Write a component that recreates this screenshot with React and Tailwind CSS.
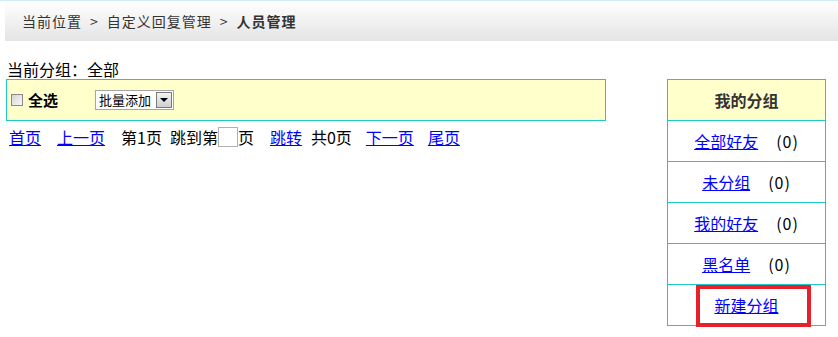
import React from 'react';

const cjk = { fontFamily: '"Noto Sans CJK SC", "Liberation Sans", sans-serif' };

function Checkbox() {
    return (
        <span className="inline-block w-[12px] h-[12px] border border-[#8a8a8a] bg-gradient-to-br from-[#d4d4d4] to-[#fafafa]" />
    );
}

function FakeSelect() {
    return (
        <div className="flex items-stretch h-[20px] w-[79px] border border-[#a5a5a5] bg-white">
            <span className="flex-1 pl-[3px] text-[13px] leading-[18px] text-black whitespace-nowrap">批量添加</span>
            <span className="w-[16px] my-[1px] mr-[1px] flex items-center justify-center border border-[#7a7a7a] bg-gradient-to-b from-[#f4f4f4] to-[#cfcfcf]">
                <span className="block w-0 h-0 border-l-[4px] border-r-[4px] border-t-[4px] border-l-transparent border-r-transparent border-t-black" />
            </span>
        </div>
    );
}

function GroupRow({ name, count, children }) {
    return (
        <div className="relative h-[41px] flex items-center justify-center border-b border-[#1cc8c8] text-[16px]">
            <a href="#" className="text-[#0000ff] underline">{name}</a>
            {count !== undefined && <span className="ml-[18px] text-black tracking-[1px]">({count})</span>}
            {children}
        </div>
    );
}

export default function App() {
    const link = 'text-[#0000ff] underline';

    return (
        <div className="w-[838px] h-[337px] bg-white overflow-hidden" style={cjk}>
            {/* top line + breadcrumb */}
            <div className="h-[1px] bg-[#d4ecf7]" />
            <div className="ml-[5px] h-[40px] flex items-center pl-[17px] bg-gradient-to-b from-[#ffffff] to-[#e4e4e4] text-[14px] text-[#333] tracking-[1px]">
                <span>当前位置</span>
                <span className="mx-[8px]">&gt;</span>
                <span>自定义回复管理</span>
                <span className="mx-[8px]">&gt;</span>
                <span className="font-bold">人员管理</span>
            </div>

            <div className="flex mt-[19px]">
                {/* left */}
                <div className="ml-[6px] w-[600px]">
                    <div className="h-[19px] pl-[1px] text-[16px] leading-[19px] text-black">当前分组：全部</div>
                    <div className="h-[42px] flex items-center border border-[#1cc8c8] bg-[#ffffcc] pl-[4px]">
                        <Checkbox />
                        <span className="ml-[5px] text-[15px] font-bold text-black">全选</span>
                        <span className="ml-[37px]"><FakeSelect /></span>
                    </div>
                    <div className="flex items-center mt-[6px] pl-[3px] text-[16px] leading-[20px] text-black">
                        <a href="#" className={link}>首页</a>
                        <a href="#" className={`${link} ml-[16px]`}>上一页</a>
                        <span className="ml-[16px]">第1页</span>
                        <span className="ml-[8px]">跳到第</span>
                        <span className="inline-block w-[20px] h-[20px] border border-[#b0b0b0] bg-white" />
                        <span>页</span>
                        <a href="#" className={`${link} ml-[16px]`}>跳转</a>
                        <span className="ml-[9px]">共0页</span>
                        <a href="#" className={`${link} ml-[14px]`}>下一页</a>
                        <a href="#" className={`${link} ml-[14px]`}>尾页</a>
                    </div>
                </div>

                {/* right: my groups */}
                <div className="ml-auto mr-[12px] mt-[19px] w-[159px] border-l border-r border-t border-[#1cc8c8]">
                    <div className="h-[41px] flex items-center justify-center bg-[#ffffcc] border-b border-[#1cc8c8] text-[16px] font-bold text-[#333]">
                        我的分组
                    </div>
                    <GroupRow name="全部好友" count={0} />
                    <GroupRow name="未分组" count={0} />
                    <GroupRow name="我的好友" count={0} />
                    <GroupRow name="黑名单" count={0} />
                    <GroupRow name="新建分组">
                        <span className="absolute left-[28px] top-0 w-[115px] h-[42px] border-[4px] border-[#e8202a]" />
                    </GroupRow>
                </div>
            </div>
        </div>
    );
}
